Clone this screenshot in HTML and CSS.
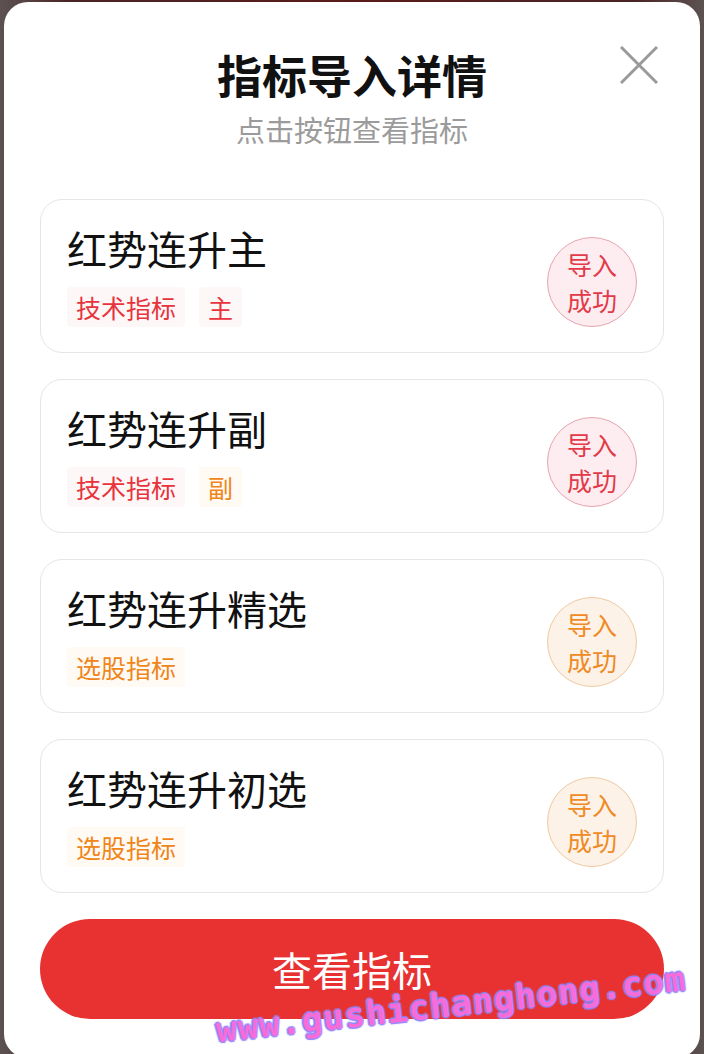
FILE: index.html
```html
<!DOCTYPE html>
<html>
<head>
    <meta charset="utf-8">
    <title>指标导入详情</title>
    <link rel="stylesheet" href="styles.css">
</head>
<body>
    <!-- Import result dialog -->
    <div class="modal">
        <div class="modal-header">
            <h1>指标导入详情</h1>
            <p class="subtitle">点击按钮查看指标</p>
            <button type="button" class="close-btn" aria-label="关闭">
                <svg width="38" height="38" viewBox="0 0 38 38"><path d="M1 1 L37 37 M37 1 L1 37" stroke="#9a9a9a" stroke-width="3" fill="none"/></svg>
            </button>
        </div>

        <div class="card-list">
            <div class="card">
                <div class="card-info">
                    <div class="card-title">红势连升主</div>
                    <div class="tags">
                        <span class="tag red">技术指标</span>
                        <span class="tag red">主</span>
                    </div>
                </div>
                <div class="badge red">导入<br>成功</div>
            </div>

            <div class="card">
                <div class="card-info">
                    <div class="card-title">红势连升副</div>
                    <div class="tags">
                        <span class="tag red">技术指标</span>
                        <span class="tag orange">副</span>
                    </div>
                </div>
                <div class="badge red">导入<br>成功</div>
            </div>

            <div class="card">
                <div class="card-info">
                    <div class="card-title">红势连升精选</div>
                    <div class="tags">
                        <span class="tag orange">选股指标</span>
                    </div>
                </div>
                <div class="badge orange">导入<br>成功</div>
            </div>

            <div class="card">
                <div class="card-info">
                    <div class="card-title">红势连升初选</div>
                    <div class="tags">
                        <span class="tag orange">选股指标</span>
                    </div>
                </div>
                <div class="badge orange">导入<br>成功</div>
            </div>
        </div>

        <button type="button" class="view-btn">查看指标</button>

        <!-- site watermark over the screenshot -->
        <div class="watermark">www.gushichanghong.com</div>
    </div>
</body>
</html>
```

FILE: styles.css
```css
/* --- Base --- */
html, body { height: 100%; }
body {
    margin: 0;
    overflow: hidden;
    background: linear-gradient(90deg, #5c5252 0%, #4a2323 10%, #5a1a1a 50%, #4a2323 90%, #5c5252 100%);
    font-family: "Noto Sans CJK SC", "Noto Sans", sans-serif;
}

/* --- Dialog --- */
.modal {
    position: relative;
    box-sizing: border-box;
    width: 696px;
    height: 1056px;
    margin: 2px 0 0 4px;
    padding: 0 36px;
    background: #fff;
    border-radius: 24px;
}

.modal-header { position: relative; text-align: center; padding-top: 45px; }
.modal-header h1 {
    margin: 0;
    font-size: 45px;
    line-height: 56px;
    font-weight: 700;
    color: #111;
}
.modal-header .subtitle {
    margin: 8px 0 0;
    font-size: 29px;
    line-height: 36px;
    color: #9b9b9b;
}
.close-btn {
    position: absolute;
    top: 44px;
    right: 6px;
    padding: 0;
    border: none;
    background: none;
    line-height: 0;
}

/* --- Result cards --- */
.card-list {
    display: flex;
    flex-direction: column;
    gap: 26px;
    margin-top: 52px;
}
.card {
    display: flex;
    align-items: center;
    justify-content: space-between;
    padding: 24px 26px 25px 26px;
    border: 1px solid #e6e6e6;
    border-radius: 22px;
}
.card-title {
    font-size: 40px;
    line-height: 48px;
    color: #111;
}
.tags { display: flex; gap: 14px; margin-top: 15px; }
.tag {
    height: 40px;
    line-height: 40px;
    padding: 0 9px;
    font-size: 25px;
    border-radius: 4px;
}
.tag.red { color: #e8333c; background: #fef7f7; }
.tag.orange { color: #f08519; background: #fffaf3; }

.badge {
    box-sizing: border-box;
    width: 90px;
    height: 90px;
    margin-top: 12px;
    border-radius: 50%;
    display: flex;
    align-items: center;
    justify-content: center;
    text-align: center;
    font-size: 25px;
    line-height: 36px;
}
.badge.red { color: #e23a48; background: #fdedf0; border: 1px solid #e6a4ae; }
.badge.orange { color: #ef8a25; background: #fdf2e7; border: 1px solid #efc9a2; }

/* --- Bottom button --- */
.view-btn {
    display: block;
    width: 100%;
    height: 100px;
    margin-top: 26px;
    border: none;
    border-radius: 50px;
    background: #e83232;
    color: #fff;
    font-family: inherit;
    font-size: 40px;
}

.watermark {
    position: absolute;
    left: 214px;
    top: 1010px;
    transform: rotate(-6.3deg);
    transform-origin: left bottom;
    font-family: "DejaVu Sans Mono", monospace;
    font-weight: bold;
    font-size: 34px;
    line-height: 36px;
    letter-spacing: 1px;
    color: #f76cd8;
    text-shadow: 1.5px 0 1px #8f86ff, -1.5px 0 1px #8f86ff, 0 1.5px 1px #8f86ff, 0 -1.5px 1px #8f86ff;
    white-space: nowrap;
}
```
